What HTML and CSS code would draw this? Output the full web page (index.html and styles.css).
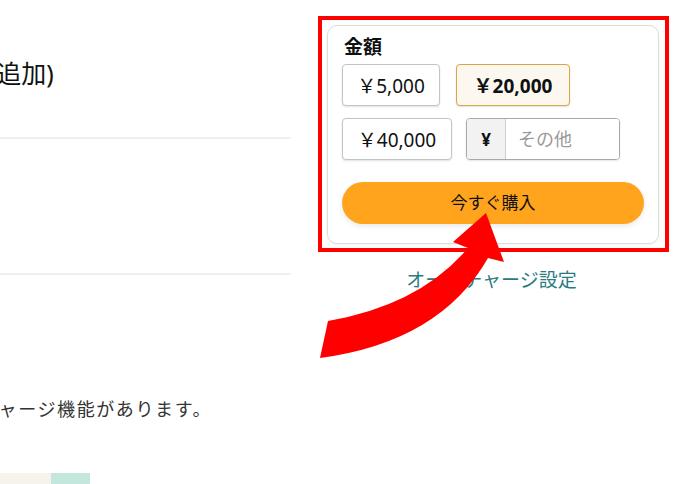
FILE: index.html
```html
<!DOCTYPE html>
<html lang="ja">
<head>
    <meta charset="UTF-8">
    <meta name="viewport" content="width=device-width, initial-scale=1.0">
    <title>チャージ</title>
    <link rel="stylesheet" href="styles.css">
</head>
<body>
    <div class="page">
        <div class="main">
            <h1 class="title">チャージ（現金追加)</h1>
            <div class="rule"></div>
            <div class="section"></div>
            <div class="rule"></div>
            <p class="note">ギフトカードには、オートチャージ機能があります。</p>
            <div class="banner">
                <span class="banner-left"></span>
                <span class="banner-right"></span>
            </div>
        </div>

        <div class="side">
            <div class="highlight">
                <div class="card">
                    <div class="label">金額</div>
                    <div class="amounts">
                        <button class="amount amount-5k">￥5,000</button>
                        <button class="amount amount-20k selected">￥20,000</button>
                    </div>
                    <div class="amounts row2">
                        <button class="amount amount-40k">￥40,000</button>
                        <div class="other">
                            <span class="yen">¥</span>
                            <input type="text" placeholder="その他">
                        </div>
                    </div>
                    <button class="buy">今すぐ購入</button>
                </div>
            </div>
            <a class="auto-link" href="#">オートチャージ設定</a>
        </div>
    </div>

    <!-- annotation arrow -->
    <svg class="arrow" width="680" height="484" viewBox="0 0 680 484">
        <path d="M486 213 L504 262 L488 258 Q440 342 320 358 L328 321 Q420 305 468 248 L453 242 Z" fill="#ff0000"/>
    </svg>
</body>
</html>
```

FILE: styles.css
```css
body {
    margin: 0;
    width: 680px;
    height: 484px;
    overflow: hidden;
    position: relative;
    background: #fff;
    color: #0f1111;
    font-family: "Noto Sans", "Noto Sans CJK JP", sans-serif;
}
.page {
    display: flex;
    align-items: flex-start;
}
.main {
    width: 291px;
    flex-shrink: 0;
}
.title {
    margin: 56px 0 0 -178px;
    font-size: 25px;
    line-height: 35px;
    font-weight: normal;
    white-space: nowrap;
}
.rule {
    height: 2px;
    background: #efefef;
}
.title + .rule { margin-top: 46px; }
.section { height: 134px; }
.note {
    margin: 121px 0 0 -256px;
    font-size: 18px;
    letter-spacing: 1.6px;
    line-height: 26px;
    color: #333;
    white-space: nowrap;
}
.banner {
    display: flex;
    margin-top: 51px;
    height: 20px;
}
.banner-left { width: 51px; background: #f6f3ed; }
.banner-right { width: 39px; background: #c3e6dd; }

.side {
    width: 351px;
    margin-left: 27px;
    padding-top: 16px;
    text-align: center;
}
.highlight {
    border: 4px solid #ff0000;
    padding: 5px 6px 4px 5px;
    text-align: left;
}
.card {
    border: 1px solid #dcdcdc;
    border-radius: 10px;
    padding: 9px 14px 19px 14px;
    box-shadow: 0 1px 3px rgba(0,0,0,0.06);
}
.label {
    font-size: 19px;
    line-height: 24px;
    font-weight: bold;
    margin-left: 2px;
    margin-bottom: 5px;
}
.amounts {
    display: flex;
    gap: 16px;
}
.row2 { margin-top: 12px; gap: 14px; }
.amount {
    height: 42px;
    border: 1px solid #c4c4c4;
    border-radius: 4px;
    background: #fff;
    font-family: inherit;
    font-size: 19px;
    color: #0f1111;
    box-shadow: 0 1px 2px rgba(0,0,0,0.12);
    padding: 0;
}
.amount-5k { width: 98px; }
.amount-20k { width: 114px; }
.amount-40k { width: 110px; }
.amount.selected {
    background: #fdf8ef;
    border-color: #d9a44a;
    font-weight: bold;
}
.other {
    display: flex;
    width: 154px;
    height: 42px;
    box-sizing: border-box;
    border: 1px solid #a8a8a8;
    border-radius: 4px;
    overflow: hidden;
    box-shadow: 0 1px 2px rgba(0,0,0,0.1);
}
.yen {
    width: 38px;
    background: #f2f2f2;
    border-right: 1px solid #cfcfcf;
    display: flex;
    align-items: center;
    justify-content: center;
    font-size: 17px;
    font-weight: bold;
}
.other input {
    flex: 1;
    min-width: 0;
    border: none;
    outline: none;
    padding: 0 0 0 12px;
    font-family: inherit;
    font-size: 18px;
}
.other input::placeholder { color: #9a9a9a; }
.buy {
    display: block;
    width: 100%;
    height: 42px;
    margin-top: 22px;
    padding-bottom: 4px;
    border: none;
    border-radius: 21px;
    background: #ffa41c;
    font-family: inherit;
    font-size: 17px;
    color: #0f1111;
    box-shadow: 0 2px 5px rgba(213,217,217,0.6);
}
.auto-link {
    display: inline-block;
    margin-top: 15px;
    margin-right: 4px;
    font-size: 19px;
    line-height: 27px;
    color: #2b7b80;
    text-decoration: none;
}
.arrow {
    position: absolute;
    left: 0;
    top: 0;
    pointer-events: none;
}
```
